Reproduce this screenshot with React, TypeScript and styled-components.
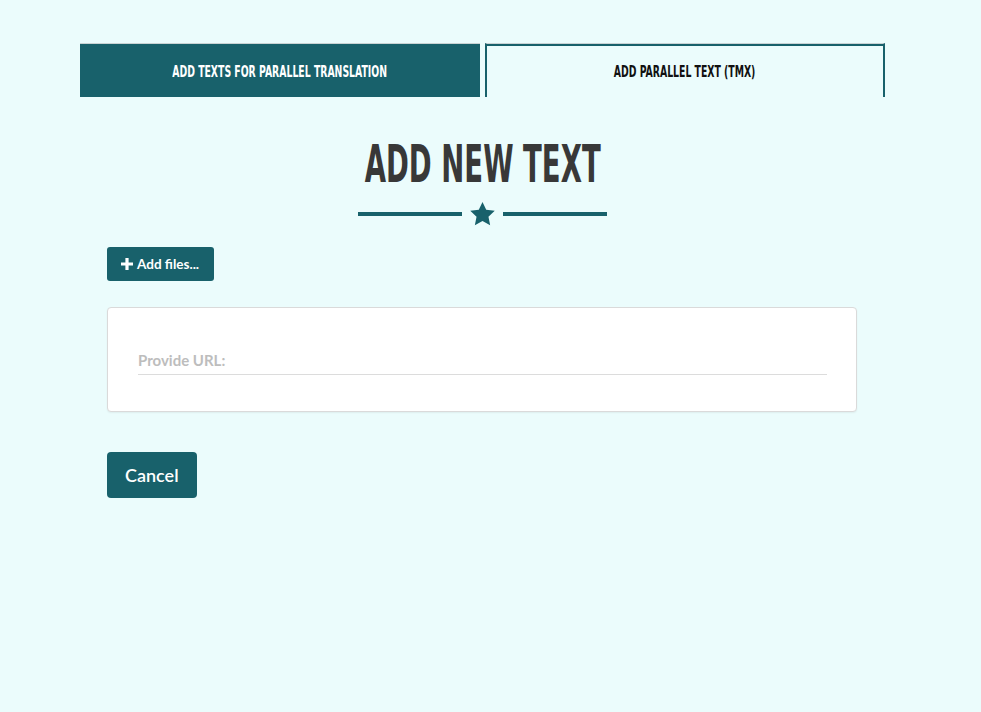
import React from "react";
import styled, { createGlobalStyle } from "styled-components";

const Global = createGlobalStyle`
  html, body { margin: 0; padding: 0; }
  body { background: #ebfcfc; font-family: Lato, "Open Sans", sans-serif; }
`;

const Page = styled.div`
  width: 981px;
  min-height: 712px;
  box-sizing: border-box;
  padding: 43px 0 0 80px;
`;

const Tabs = styled.div`
  display: flex;
  gap: 5px;
  width: 805px;
`;

const Tab = styled.div<{ $active?: boolean }>`
  box-sizing: border-box;
  width: 400px;
  height: 54px;
  display: flex;
  align-items: center;
  justify-content: center;
  border-top: 1px solid #c9d3d4;
  background: ${(p) => (p.$active ? "#ebfcfc" : "#18616b")};
  color: ${(p) => (p.$active ? "#111" : "#fff")};
  border-left: ${(p) => (p.$active ? "2px solid #18616b" : "none")};
  border-right: ${(p) => (p.$active ? "2px solid #18616b" : "none")};
  box-shadow: ${(p) => (p.$active ? "inset 0 2px 0 #18616b" : "none")};
  padding-top: 2px;
`;

const TabLabel = styled.span`
  display: inline-block;
  white-space: nowrap;
  font-family: "DejaVu Sans Condensed", "DejaVu Sans", sans-serif;
  font-weight: 700;
  font-size: 15px;
  text-transform: uppercase;
  transform: scaleX(0.69);
`;

const Heading = styled.div`
  width: 805px;
  display: flex;
  flex-direction: column;
  align-items: center;
  margin-top: 40px;
`;

const Title = styled.h1`
  margin: 0;
  white-space: nowrap;
  font-family: "DejaVu Sans Condensed", "DejaVu Sans", sans-serif;
  font-weight: 700;
  font-size: 51px;
  line-height: 56px;
  color: #383838;
  text-transform: uppercase;
  transform: scaleX(0.6);
`;

const Divider = styled.div`
  display: flex;
  align-items: center;
  gap: 7px;
  margin-top: 8px;
`;

const Rule = styled.div`
  width: 104px;
  height: 4px;
  background: #18616b;
`;

const Content = styled.div`
  padding-left: 27px;
  margin-top: 20px;
  width: 750px;
`;

const SmallButton = styled.button`
  display: inline-flex;
  align-items: center;
  gap: 4px;
  height: 34px;
  padding: 0 15px 0 14px;
  background: #18616b;
  color: #fff;
  border: none;
  border-radius: 3px;
  font-family: Lato, sans-serif;
  font-weight: 700;
  font-size: 13.5px;
`;

const Card = styled.div`
  box-sizing: border-box;
  margin-top: 26px;
  width: 750px;
  height: 105px;
  background: #fff;
  border: 1px solid #dadada;
  border-radius: 4px;
  box-shadow: 0 1px 2px rgba(0, 0, 0, 0.06);
  padding: 37px 30px 0 30px;
`;

const UrlInput = styled.input`
  box-sizing: border-box;
  width: 689px;
  height: 30px;
  border: none;
  border-bottom: 1px solid #dcdcdc;
  outline: none;
  padding: 0;
  font-family: Lato, sans-serif;
  font-weight: 700;
  font-size: 15px;
  color: #333;
  background: transparent;
  &::placeholder { color: #bdbdbd; }
`;

const BigButton = styled.button`
  margin-top: 40px;
  height: 46px;
  padding: 0 18px;
  background: #18616b;
  color: #fff;
  border: none;
  border-radius: 4px;
  font-family: Lato, sans-serif;
  font-size: 18px;
  font-weight: 600;
`;

const Star = () => (
  <svg width="27" height="26" viewBox="0 0 24 23">
    <path
      d="M12 0.8l3.3 7 7.6 0.9-5.6 5.2 1.5 7.6L12 17.7l-6.8 3.8 1.5-7.6L1.1 8.7l7.6-0.9z"
      fill="#18616b"
    />
  </svg>
);

const Plus = () => (
  <svg width="12" height="12" viewBox="0 0 12 12">
    <path d="M4.4 0h3.2v4.4H12v3.2H7.6V12H4.4V7.6H0V4.4h4.4z" fill="#fff" />
  </svg>
);

export default function App() {
  return (
    <>
      <Global />
      <Page>
        <Tabs>
          <Tab>
            <TabLabel>Add texts for parallel translation</TabLabel>
          </Tab>
          <Tab $active>
            <TabLabel>Add parallel text (TMX)</TabLabel>
          </Tab>
        </Tabs>
        <Heading>
          <Title>Add new text</Title>
          <Divider>
            <Rule />
            <Star />
            <Rule />
          </Divider>
        </Heading>
        <Content>
          <SmallButton>
            <Plus />
            Add files...
          </SmallButton>
          <Card>
            <UrlInput placeholder="Provide URL:" />
          </Card>
          <BigButton>Cancel</BigButton>
        </Content>
      </Page>
    </>
  );
}
